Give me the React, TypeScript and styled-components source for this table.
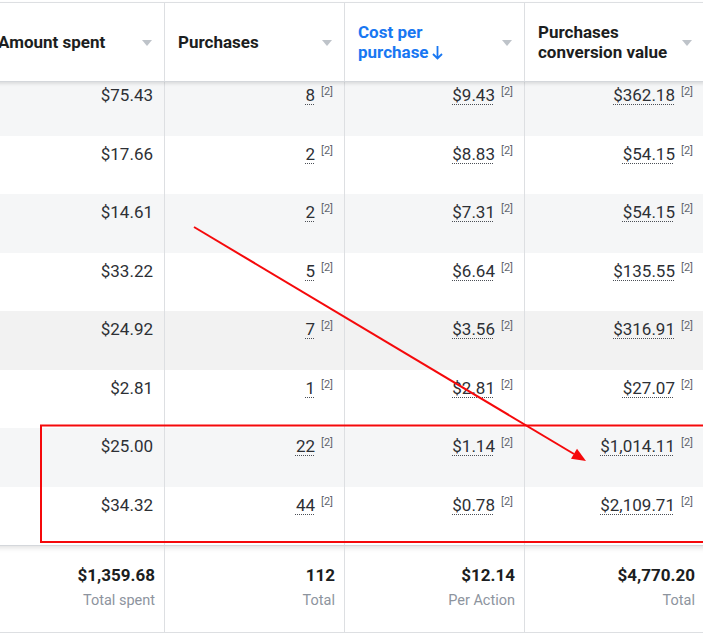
import React from 'react';
import styled, { createGlobalStyle } from 'styled-components';

const GlobalStyle = createGlobalStyle`
  * {
    box-sizing: border-box;
  }
  body {
    margin: 0;
    background: #ffffff;
    font-family: Roboto, "Liberation Sans", Arial, sans-serif;
    overflow: hidden;
  }
`;

type Row = {
  spent: string;
  purchases: string;
  cost: string;
  value: string;
};

const rows: Row[] = [
  { spent: '$75.43', purchases: '8', cost: '$9.43', value: '$362.18' },
  { spent: '$17.66', purchases: '2', cost: '$8.83', value: '$54.15' },
  { spent: '$14.61', purchases: '2', cost: '$7.31', value: '$54.15' },
  { spent: '$33.22', purchases: '5', cost: '$6.64', value: '$135.55' },
  { spent: '$24.92', purchases: '7', cost: '$3.56', value: '$316.91' },
  { spent: '$2.81', purchases: '1', cost: '$2.81', value: '$27.07' },
  { spent: '$25.00', purchases: '22', cost: '$1.14', value: '$1,014.11' },
  { spent: '$34.32', purchases: '44', cost: '$0.78', value: '$2,109.71' },
];

const totals = [
  { value: '$1,359.68', label: 'Total spent' },
  { value: '112', label: 'Total' },
  { value: '$12.14', label: 'Per Action' },
  { value: '$4,770.20', label: 'Total' },
];

const Caret = () => (
  <CaretIcon width="10" height="6" viewBox="0 0 10 6">
    <path d="M0 0 L10 0 L5 6 Z" fill="#bec3c9" />
  </CaretIcon>
);

const SortArrow = () => (
  <svg width="11" height="15" viewBox="0 0 11 15" style={{ marginLeft: 3, verticalAlign: '-2px' }}>
    <path d="M5.5 1 V13.5 M1 9 L5.5 13.5 L10 9" fill="none" stroke="#1877f2" strokeWidth="1.8" />
  </svg>
);

const Value = ({ text }: { text: string }) => (
  <ValueWrap>
    <Dotted>{text}</Dotted>
    <Note>[2]</Note>
  </ValueWrap>
);

const App = () => {
  return (
    <Page>
      <GlobalStyle />
      <Table>
        <Header>
          <HeadCell>
            <HeadText>Amount spent</HeadText>
            <Caret />
          </HeadCell>
          <HeadCell>
            <HeadText>Purchases</HeadText>
            <Caret />
          </HeadCell>
          <HeadCell>
            <HeadText active>
              Cost per
              <br />
              purchase
              <SortArrow />
            </HeadText>
            <Caret />
          </HeadCell>
          <HeadCell>
            <HeadText>
              Purchases
              <br />
              conversion value
            </HeadText>
            <Caret />
          </HeadCell>
        </Header>

        <Body>
          {rows.map((row, i) => (
            <BodyRow key={i} shade={i === 4 ? 'hover' : i % 2 === 0 ? 'odd' : 'even'}>
              <Cell>{row.spent}</Cell>
              <Cell>
                <Value text={row.purchases} />
              </Cell>
              <Cell>
                <Value text={row.cost} />
              </Cell>
              <Cell>
                <Value text={row.value} />
              </Cell>
            </BodyRow>
          ))}
        </Body>

        <Footer>
          {totals.map((t, i) => (
            <FootCell key={i}>
              <TotalValue>{t.value}</TotalValue>
              <TotalLabel>{t.label}</TotalLabel>
            </FootCell>
          ))}
        </Footer>
      </Table>

      <Annotation width="703" height="637" viewBox="0 0 703 637">
        <rect x="41" y="425.5" width="680" height="116.5" fill="none" stroke="#f5090b" strokeWidth="2" />
        <line x1="194" y1="227" x2="574" y2="454" stroke="#f5090b" strokeWidth="2" />
        <polygon points="586,461 571,458.8 577,448.8" fill="#f5090b" />
      </Annotation>
    </Page>
  );
};

export default App;

const Page = styled.div`
  position: relative;
  width: 703px;
  height: 637px;
  overflow: hidden;
  padding-top: 2px;
  background: #ffffff;
`;

const Table = styled.div`
  width: 720px;
  margin-left: -15px;
  display: flex;
  flex-direction: column;
`;

const Header = styled.div`
  position: relative;
  z-index: 2;
  display: grid;
  grid-template-columns: repeat(4, 180px);
  height: 80px;
  background: #ffffff;
  border-top: 1px solid #dddfe2;
  border-bottom: 1px solid #d4d7db;
  box-shadow: 0 2px 3px rgba(0, 0, 0, 0.1);
`;

const HeadCell = styled.div`
  display: flex;
  align-items: center;
  justify-content: space-between;
  padding: 0 12px 0 13px;
  border-right: 1px solid #dddfe2;
`;

const HeadText = styled.div<{ active?: boolean }>`
  font-size: 17px;
  line-height: 20px;
  font-weight: 700;
  color: ${({ active }) => (active ? '#1877f2' : '#1c1e21')};
  white-space: nowrap;
`;

const CaretIcon = styled.svg`
  flex-shrink: 0;
  margin-top: 2px;
`;

const Body = styled.div`
  margin-top: -5px;
  display: flex;
  flex-direction: column;
`;

const BodyRow = styled.div<{ shade: 'odd' | 'even' | 'hover' }>`
  display: grid;
  grid-template-columns: repeat(4, 180px);
  height: 58.5px;
  background: ${({ shade }) =>
    shade === 'odd' ? '#f5f6f7' : shade === 'hover' ? '#f2f2f2' : '#ffffff'};
`;

const Cell = styled.div`
  display: flex;
  justify-content: flex-end;
  align-items: flex-start;
  padding: 8px 11px 0 0;
  border-right: 1px solid #dddfe2;
  font-size: 17px;
  line-height: 20px;
  color: #2d3035;
`;

const ValueWrap = styled.span`
  display: inline-flex;
  align-items: flex-start;
`;

const Dotted = styled.span`
  text-decoration: underline dotted #4b4f56;
  text-decoration-thickness: 1px;
  text-underline-offset: 3px;
`;

const Note = styled.span`
  margin-left: 6px;
  margin-top: 1px;
  font-size: 11px;
  line-height: 12px;
  color: #5f646c;
`;

const Footer = styled.div`
  display: grid;
  grid-template-columns: repeat(4, 180px);
  height: 88px;
  background: #ffffff;
  border-top: 1px solid #d4d7db;
  border-bottom: 1px solid #dddfe2;
  box-shadow: inset 0 5px 5px -3px rgba(0, 0, 0, 0.12);
`;

const FootCell = styled.div`
  display: flex;
  flex-direction: column;
  align-items: flex-end;
  padding: 19px 9px 0 0;
  border-right: 1px solid #dddfe2;
`;

const TotalValue = styled.div`
  font-size: 17px;
  line-height: 20px;
  font-weight: 700;
  color: #1c1e21;
`;

const TotalLabel = styled.div`
  margin-top: 6px;
  font-size: 14.5px;
  line-height: 20px;
  color: #8d949e;
`;

const Annotation = styled.svg`
  position: absolute;
  inset: 0;
  pointer-events: none;
  z-index: 3;
`;
